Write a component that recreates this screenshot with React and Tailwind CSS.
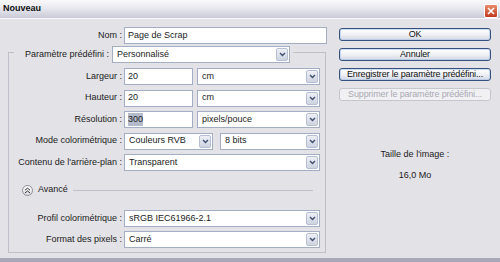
import React from 'react';

const Chevron = () => (
  <svg width="7" height="5" viewBox="0 0 7 5">
    <path d="M1 1l2.5 2.5L6 1" fill="none" stroke="#3f4f70" strokeWidth="1.4" />
  </svg>
);

function Select({ className, value }) {
  return (
    <div className={`h-[17px] flex items-center bg-white border border-[#a3adc4] ${className}`}>
      <span className="flex-1 pl-[4px] truncate">{value}</span>
      <span className="w-[12px] h-[13px] mr-px flex items-center justify-center rounded-[2px] border border-[#b7c0d3] bg-gradient-to-b from-[#eef0f6] to-[#cdd3e0]">
        <Chevron />
      </span>
    </div>
  );
}

function Input({ className, children }) {
  return (
    <div className={`h-[17px] flex items-center bg-white border border-[#a3adc4] pl-[3px] ${className}`}>
      {children}
    </div>
  );
}

function Row({ label, children }) {
  return (
    <div className="flex items-center h-[17px] gap-[2px]">
      <span className="w-[113px] text-right whitespace-nowrap">{label}</span>
      {children}
    </div>
  );
}

function Button({ children, disabled }) {
  if (disabled) {
    return (
      <div className="h-[13px] rounded-[3px] border border-[#c6c6cf] bg-[#f1f1f4] flex items-center justify-center tracking-[-0.15px] text-[#a9a9b3]">
        {children}
      </div>
    );
  }
  return (
    <div className="h-[13px] rounded-[3px] border border-[#35527e] bg-gradient-to-b from-white via-[#f0f1f5] to-[#d3d8e4] shadow-[inset_0_0_0_1px_rgba(175,195,230,0.6)] flex items-center justify-center tracking-[-0.15px] text-[#111]">
      {children}
    </div>
  );
}

export default function App() {
  return (
    <div className="w-[500px] h-[262px] flex flex-col overflow-hidden bg-[#e3e2e7] font-['Liberation_Sans',Arial,sans-serif] text-[9px] text-[#1b1b1b]">
      {/* title bar */}
      <div className="h-[18px] flex items-center justify-between pl-[3px] pr-[2px] bg-gradient-to-b from-[#fafafc] via-[#e6e6ee] to-[#cacad7]">
        <span className="font-bold text-[#111]">Nouveau</span>
        <span className="w-[14px] h-[14px] mt-[4px] rounded-[2px] border border-white bg-gradient-to-b from-[#e88a6c] to-[#c1391d] flex items-center justify-center">
          <svg width="8" height="8" viewBox="0 0 8 8">
            <path d="M1 1l6 6M7 1L1 7" stroke="white" strokeWidth="1.6" />
          </svg>
        </span>
      </div>
      <div className="h-px bg-[#f7f7fa]" />

      <div className="flex-1 flex border-b-[4px] border-[#a9a8b8]">
        {/* left column */}
        <div className="w-[327px] pl-[8px] pt-[8px] flex flex-col">
          <div className="flex items-center h-[17px] gap-[2px]">
            <span className="w-[114px] text-right">Nom :</span>
            <Input className="w-[203px]">Page de Scrap</Input>
          </div>

          <div className="mt-[2px] w-[318px] flex flex-col">
            <div className="flex h-[17px]">
              <div className="self-end h-[11px] w-[6px] border-l border-t border-[#bfbfc9]" />
              <div className="flex items-center pl-[11px] pr-[3px] gap-[3px]">
                <span className="whitespace-nowrap">Paramètre prédéfini :</span>
                <Select className="w-[178px]" value="Personnalisé" />
              </div>
              <div className="self-end h-[11px] flex-1 border-t border-r border-[#bfbfc9]" />
            </div>

            <div className="border-l border-r border-b border-[#bfbfc9] pt-[5px] pb-[4px] flex flex-col">
              <div className="flex flex-col gap-[4.5px]">
                <Row label="Largeur :">
                  <Input className="w-[69px]">20</Input>
                  <Select className="w-[123px] ml-[2px]" value="cm" />
                </Row>
                <Row label="Hauteur :">
                  <Input className="w-[69px]">20</Input>
                  <Select className="w-[123px] ml-[2px]" value="cm" />
                </Row>
                <Row label="Résolution :">
                  <Input className="w-[69px]">
                    <span className="bg-[#b2bacb] leading-[13px]">300</span>
                  </Input>
                  <Select className="w-[123px] ml-[2px]" value="pixels/pouce" />
                </Row>
                <Row label="Mode colorimétrique :">
                  <Select className="w-[89px]" value="Couleurs RVB" />
                  <Select className="w-[100px] ml-[5px]" value="8 bits" />
                </Row>
                <Row label="Contenu de l'arrière-plan :">
                  <Select className="w-[196px]" value="Transparent" />
                </Row>
              </div>

              <div className="mt-[13px] h-[12px] flex items-center pl-[13px] pr-[12px]">
                <span className="w-[11px] h-[11px] rounded-full border border-[#8d8d97] bg-gradient-to-b from-white to-[#dcdce4] flex items-center justify-center">
                  <svg width="7" height="7" viewBox="0 0 7 7">
                    <path d="M1 3.2l2.5-2 2.5 2M1 6l2.5-2 2.5 2" fill="none" stroke="#333" strokeWidth="1" />
                  </svg>
                </span>
                <span className="ml-[5px]">Avancé</span>
                <span className="ml-[5px] flex-1 h-px bg-[#bfbfc9]" />
              </div>

              <div className="mt-[14px] flex flex-col gap-[4px]">
                <Row label="Profil colorimétrique :">
                  <Select className="w-[196px]" value="sRGB IEC61966-2.1" />
                </Row>
                <Row label="Format des pixels :">
                  <Select className="w-[196px]" value="Carré" />
                </Row>
              </div>
            </div>
          </div>
        </div>

        {/* right column */}
        <div className="w-[152px] ml-[12px] pt-[9px] flex flex-col">
          <div className="flex flex-col gap-[7px]">
            <Button>OK</Button>
            <Button>Annuler</Button>
            <Button>Enregistrer le paramètre prédéfini...</Button>
            <Button disabled>Supprimer le paramètre prédéfini...</Button>
          </div>
          <div className="mt-[47px] text-center">Taille de l'image :</div>
          <div className="mt-[7px] text-center">16,0 Mo</div>
        </div>
      </div>
    </div>
  );
}
